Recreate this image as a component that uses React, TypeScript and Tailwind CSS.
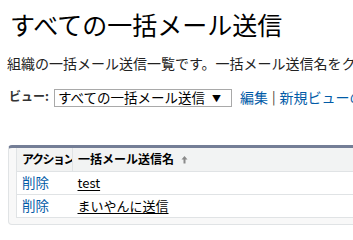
import React from "react";

const font = { fontFamily: '"Noto Sans CJK JP", "Noto Sans", sans-serif' };

export default function App() {
  const rows = ["test", "まいやんに送信"];

  return (
    <div
      className="w-[353px] h-[232px] overflow-hidden bg-white text-black"
      style={font}
    >
      <h1 className="pl-[10px] pt-[9px] text-[25px] leading-[30px] font-normal whitespace-nowrap">
        すべての一括メール送信
      </h1>

      <p className="pl-[7px] mt-[15px] text-[14px] leading-[18px] whitespace-nowrap text-[#222]">
        組織の一括メール送信一覧です。一括メール送信名をクリックすると詳細を表示します。
      </p>

      <div className="flex items-center mt-[17px] pl-[9px] h-[18px] whitespace-nowrap">
        <span className="shrink-0 text-[12px] font-bold text-[#333] -mt-[4px]">ビュー:</span>
        <div className="shrink-0 ml-[5px] w-[178px] h-[18px] border border-[#a9a9a9] bg-white flex items-center pl-[3px] pr-[10px]">
          <span className="text-[13.5px] leading-none">すべての一括メール送信</span>
          <span className="ml-auto text-[9px] leading-none">▼</span>
        </div>
        <a className="shrink-0 ml-[8px] text-[14px] text-[#015ba7] -mt-[2px]">編集</a>
        <span className="shrink-0 mx-[4px] text-[13px] text-[#333] -mt-[2px]">|</span>
        <a className="shrink-0 text-[14px] text-[#015ba7] -mt-[2px]">新規ビューの作成</a>
      </div>

      <div className="mt-[38px] ml-[8px] w-[420px] border border-[#e0e3e5] border-t-[3px] border-t-[#747e96] rounded-[4px] bg-[#f8f8f8] pl-[7px] pb-[6px]">
        <table className="w-full table-fixed border-collapse bg-white border border-t-0 border-[#e0e3e5]">
          <thead>
            <tr className="bg-[#f2f3f3] h-[23px] border-b border-[#e0e3e5]">
              <th className="w-[56px] pl-[5px] text-left text-[12px] font-bold tracking-[-1.5px] border-r border-[#e0e3e5] whitespace-nowrap overflow-hidden">
                アクション
              </th>
              <th className="pl-[5px] text-left text-[12px] font-bold whitespace-nowrap">
                <span className="inline-flex items-center">
                  一括メール送信名
                  <svg width="7" height="9" viewBox="0 0 7 9" className="ml-[7px]">
                    <path d="M3.5 1 L6.5 4.5 H4.5 V8.5 H2.5 V4.5 H0.5 Z" fill="#8a8a8a" />
                  </svg>
                </span>
              </th>
            </tr>
          </thead>
          <tbody>
            {rows.map((name, i) => (
              <tr
                key={name}
                className={`h-[23px] ${i === 0 ? "border-b border-[#e0e3e5]" : ""}`}
              >
                <td className="pl-[5px] text-[13.5px] text-[#015ba7] whitespace-nowrap">
                  削除
                </td>
                <td className="pl-[5px] text-[13px] whitespace-nowrap">
                  <a className="underline underline-offset-2">{name}</a>
                </td>
              </tr>
            ))}
          </tbody>
        </table>
      </div>
    </div>
  );
}
